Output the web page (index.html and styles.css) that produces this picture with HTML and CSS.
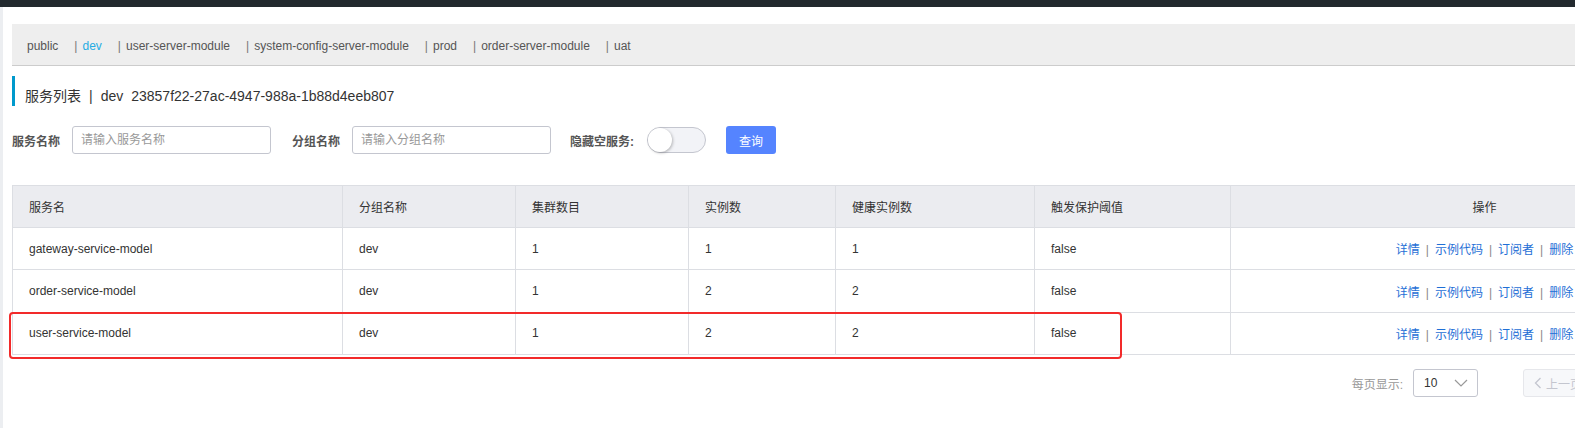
FILE: index.html
```html
<!DOCTYPE html>
<html lang="zh-CN">
<head>
<meta charset="utf-8">
<title>服务列表</title>
<link rel="stylesheet" href="styles.css">
</head>
<body>
<div class="topbar"></div>
<div class="layout">
  <div class="main">
    <div class="ns-tabs">
      <span class="ns">public</span>
      <span class="sep">|</span><span class="ns active">dev</span>
      <span class="sep">|</span><span class="ns">user-server-module</span>
      <span class="sep">|</span><span class="ns">system-config-server-module</span>
      <span class="sep">|</span><span class="ns">prod</span>
      <span class="sep">|</span><span class="ns">order-server-module</span>
      <span class="sep">|</span><span class="ns">uat</span>
    </div>

    <div class="page-title">服务列表<span class="title-sep">|</span>dev<span class="ns-id">23857f22-27ac-4947-988a-1b88d4eeb807</span></div>

    <div class="search-row">
      <div class="form-item">
        <label class="form-label">服务名称</label>
        <input class="text-input" type="text" placeholder="请输入服务名称">
      </div>
      <div class="form-item form-item-group">
        <label class="form-label">分组名称</label>
        <input class="text-input" type="text" placeholder="请输入分组名称">
      </div>
      <div class="form-item">
        <label class="form-label switch-label">隐藏空服务:</label>
        <span class="switch"><span class="knob"></span></span>
      </div>
      <button class="btn-primary" type="button">查询</button>
    </div>

    <div class="table-wrap">
      <table class="svc-table">
        <colgroup>
          <col class="c1"><col class="c2"><col class="c3"><col class="c4"><col class="c5"><col class="c6"><col class="c7">
        </colgroup>
        <thead>
          <tr>
            <th>服务名</th><th>分组名称</th><th>集群数目</th><th>实例数</th><th>健康实例数</th><th>触发保护阈值</th><th class="ops-head">操作</th>
          </tr>
        </thead>
        <tbody>
          <tr>
            <td>gateway-service-model</td><td>dev</td><td>1</td><td>1</td><td>1</td><td>false</td>
            <td class="ops"><a>详情</a><span class="op-sep">|</span><a>示例代码</a><span class="op-sep">|</span><a>订阅者</a><span class="op-sep">|</span><a>删除</a></td>
          </tr>
          <tr>
            <td>order-service-model</td><td>dev</td><td>1</td><td>2</td><td>2</td><td>false</td>
            <td class="ops"><a>详情</a><span class="op-sep">|</span><a>示例代码</a><span class="op-sep">|</span><a>订阅者</a><span class="op-sep">|</span><a>删除</a></td>
          </tr>
          <tr>
            <td>user-service-model</td><td>dev</td><td>1</td><td>2</td><td>2</td><td>false</td>
            <td class="ops"><a>详情</a><span class="op-sep">|</span><a>示例代码</a><span class="op-sep">|</span><a>订阅者</a><span class="op-sep">|</span><a>删除</a></td>
          </tr>
        </tbody>
      </table>
      <div class="highlight-box"></div>
    </div>

    <div class="pagination">
      <span class="page-size-label">每页显示:</span>
      <span class="select">10<svg class="chev" width="14" height="8" viewBox="0 0 14 8"><path d="M1 1 L7 7 L13 1" fill="none" stroke="#999" stroke-width="1.2"/></svg></span>
      <div class="pager">
        <span class="pg-btn disabled"><svg width="8" height="12" viewBox="0 0 8 12"><path d="M6.5 1 L1.5 6 L6.5 11" fill="none" stroke="#c4c6cf" stroke-width="1.3"/></svg>上一页</span>
        <span class="pg-num current">1</span>
        <span class="pg-btn disabled">下一页<svg width="8" height="12" viewBox="0 0 8 12"><path d="M1.5 1 L6.5 6 L1.5 11" fill="none" stroke="#c4c6cf" stroke-width="1.3"/></svg></span>
      </div>
    </div>
  </div>
</div>
</body>
</html>
```
FILE: styles.css
```css
html, body {
  margin: 0;
  padding: 0;
  overflow: hidden;
  background: #fff;
}
body {
  font-family: "Liberation Sans", Arial, "Noto Sans CJK SC", sans-serif;
  font-size: 12px;
  color: #333;
  width: 1575px;
  height: 428px;
}
.topbar {
  height: 7px;
  background: #22292e;
}
.layout {
  display: flex;
  border-left: 3px solid #eceef1;
  height: 421px;
}
.main {
  flex: none;
  width: 1724px;
  padding: 17px 0 0 9px;
}
.ns-tabs {
  height: 42px;
  background: #eeeeee;
  border-bottom: 1px solid #cccccc;
  display: flex;
  align-items: center;
  padding: 2px 0 0 15px;
  font-size: 12px;
  color: #555;
  box-sizing: border-box;
  width: 1800px;
}
.ns-tabs .ns.active {
  color: #26ace3;
}
.ns-tabs .sep {
  margin: 0 5px 0 16px;
  color: #777;
}
.page-title {
  margin-top: 10px;
  height: 30px;
  box-sizing: border-box;
  padding-top: 10px;
  line-height: 20px;
  border-left: 3px solid #0099cc;
  padding-left: 10px;
  font-size: 14px;
  color: #333;
}
.title-sep {
  margin: 0 8px;
}
.ns-id {
  margin-left: 8px;
}
.search-row {
  margin-top: 20px;
  display: flex;
  align-items: center;
  height: 28px;
}
.form-item {
  display: flex;
  align-items: center;
  margin-right: 21px;
}
.form-item.form-item-group {
  margin-right: 19px;
}
.form-label {
  font-weight: bold;
  color: #555;
  margin-right: 12px;
  font-size: 12px;
}
.form-label.switch-label {
  margin-right: 13px;
}
.text-input {
  width: 199px;
  height: 28px;
  box-sizing: border-box;
  border: 1px solid #c4c6cf;
  border-radius: 3px;
  padding: 0 8px;
  font-family: inherit;
  font-size: 12px;
  color: #333;
  outline: none;
}
.text-input::placeholder {
  color: #999;
}
.switch {
  display: block;
  width: 59px;
  height: 26px;
  box-sizing: border-box;
  border: 1px solid #c4c6cf;
  border-radius: 13px;
  background: #f2f3f7;
  position: relative;
}
.knob {
  position: absolute;
  left: 0;
  top: 0;
  width: 24px;
  height: 24px;
  border-radius: 50%;
  background: #fff;
  box-shadow: 1px 1px 3px rgba(0,0,0,0.25);
}
.btn-primary {
  margin-left: -1px;
  height: 28px;
  width: 50px;
  padding: 0;
  border: none;
  border-radius: 3px;
  background: #5584ff;
  color: #fff;
  font-family: inherit;
  font-size: 12px;
}
.table-wrap {
  margin-top: 31px;
  position: relative;
}
.svc-table {
  width: 1726px;
  table-layout: fixed;
  border-collapse: collapse;
  font-size: 12px;
}
.c1 { width: 330px; }
.c2 { width: 173px; }
.c3 { width: 173px; }
.c4 { width: 147px; }
.c5 { width: 199px; }
.c6 { width: 196px; }
.c7 { width: 508px; }
.svc-table th,
.svc-table td {
  border: 1px solid #dcdee3;
  height: 41px;
  padding: 0 16px;
  text-align: left;
  font-weight: normal;
  color: #333;
  white-space: nowrap;
}
.svc-table td {
  height: 41.4px;
}
.svc-table th {
  background: #ebecf0;
}
.svc-table th.ops-head,
.svc-table td.ops {
  text-align: center;
}
.ops a {
  color: #1f6fd6;
}
.op-sep {
  margin: 0 6px;
  color: #888;
}
.highlight-box {
  position: absolute;
  left: -3px;
  top: 127px;
  width: 1109px;
  height: 43px;
  border: 2px solid #f22a2a;
  border-radius: 4px;
}
.pagination {
  margin-top: 14px;
  display: flex;
  align-items: center;
  justify-content: flex-end;
  padding-right: 33px;
  height: 28px;
}
.page-size-label {
  color: #999;
  margin-right: 10px;
}
.select {
  width: 65px;
  height: 28px;
  box-sizing: border-box;
  border: 1px solid #c4c6cf;
  border-radius: 3px;
  display: flex;
  align-items: center;
  justify-content: space-between;
  padding: 0 9px 0 10px;
  color: #333;
  margin-right: 45px;
}
.pager {
  display: flex;
  align-items: center;
  gap: 4px;
}
.pg-btn {
  height: 28px;
  box-sizing: border-box;
  padding: 0 10px;
  display: flex;
  align-items: center;
  gap: 4px;
  border: 1px solid #e6e7eb;
  border-radius: 3px;
  background: #f7f8fa;
  color: #c4c6cf;
  width: 72px;
}
.pg-num {
  width: 28px;
  height: 28px;
  box-sizing: border-box;
  display: flex;
  align-items: center;
  justify-content: center;
  border: 1px solid #5584ff;
  border-radius: 3px;
  background: #5584ff;
  color: #fff;
}
```
